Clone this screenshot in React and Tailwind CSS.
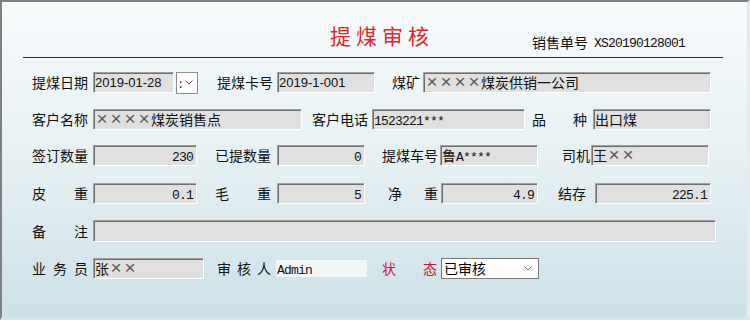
import React from 'react';

const Xs = ({ n }) => (
    <>
        {Array.from({ length: n }).map((_, i) => (
            <span key={i} className="inline-block w-[14px] text-center align-top font-['Liberation_Sans',sans-serif] text-[19px] leading-[18px] font-light text-[#5a5a5a]">×</span>
        ))}
    </>
);

const Sunken = ({ className = '', right, children }) => (
    <div
        className={`h-[21px] shrink-0 bg-[#e0e0e0] border border-t-[#a0a0a0] border-l-[#a0a0a0] border-r-white border-b-white shadow-[inset_1px_1px_0_#6e6e6e] leading-[19px] whitespace-nowrap overflow-hidden ${right ? 'text-right pr-[3px]' : 'pl-[1px]'} ${className}`}
    >
        {children}
    </div>
);

const Mono = ({ children }) => (
    <span className="font-['Liberation_Mono','Noto_Sans_CJK_SC',monospace] text-[13px] tracking-[-0.8px]">{children}</span>
);

const Label = ({ className = '', children }) => (
    <span className={`shrink-0 leading-[21px] whitespace-nowrap ${className}`}>{children}</span>
);

// 两端对齐的标签 e.g. 皮    重
const Spread = ({ className = '', chars }) => (
    <span className={`shrink-0 flex justify-between leading-[21px] ${className}`}>
        {chars.split('').map((c, i) => <span key={i}>{c}</span>)}
    </span>
);

const Chevron = ({ className = '' }) => (
    <svg className={className} width="8" height="5" viewBox="0 0 8 5" fill="none">
        <path d="M0.5 0.5 L4 4 L7.5 0.5" stroke="#6b6b6b" strokeWidth="1" />
    </svg>
);

const App = () => {
    return (
        <div className="w-[750px] h-[320px] overflow-hidden font-['Noto_Sans_CJK_SC',sans-serif] text-[14px] text-[#111]">
            <div className="h-full flex flex-col border-l-2 border-t-2 border-l-[#808080] border-t-[#808080] border-r-[3px] border-b-[3px] border-r-[#e4ecef] border-b-[#d9e6ea] bg-gradient-to-b from-[#f8fbfc] via-[#e6f0f3] to-[#cce1e8]">
                {/* 标题 */}
                <div className="h-[55px] pt-[23px] flex items-start shrink-0">
                    <span className="ml-[328px] text-[21px] leading-none tracking-[5px] text-[#e5262b]">提煤审核</span>
                    <span className="ml-[98px] mt-[9px] leading-none flex items-center">
                        销售单号
                        <span className="ml-[6px]"><Mono>XS20190128001</Mono></span>
                    </span>
                </div>
                <div className="ml-[21px] mr-[24px] h-px bg-[#1c2a8c] shrink-0" />

                <div className="pl-[30px] flex flex-col">
                    {/* 第一行 */}
                    <div className="mt-[14px] flex items-center h-[21px]">
                        <Label className="w-[56px]">提煤日期</Label>
                        <Sunken className="ml-[5px] w-[81px] font-['Liberation_Sans',sans-serif] text-[13px]">2019-01-28</Sunken>
                        <div className="ml-[2px] w-[22px] h-[22px] bg-white border border-[#8c8c8c] flex items-center shrink-0">
                            <span className="ml-[2px] text-[12px] leading-none">:</span>
                            <Chevron className="ml-[3px]" />
                        </div>
                        <Label className="ml-[19px] w-[56px]">提煤卡号</Label>
                        <Sunken className="ml-[4px] w-[98px] font-['Liberation_Sans',sans-serif] text-[13px]">2019-1-001</Sunken>
                        <Label className="ml-[17px] w-[28px]">煤矿</Label>
                        <Sunken className="ml-[3px] w-[288px]"><Xs n={4} />煤炭供销一公司</Sunken>
                    </div>

                    {/* 第二行 */}
                    <div className="mt-[16px] flex items-center h-[21px]">
                        <Label className="w-[56px]">客户名称</Label>
                        <Sunken className="ml-[5px] w-[209px]"><Xs n={4} />煤炭销售点</Sunken>
                        <Label className="ml-[10px] w-[56px]">客户电话</Label>
                        <Sunken className="ml-[4px] w-[153px]"><Mono>1523221***</Mono></Sunken>
                        <Spread className="ml-[7px] w-[55px]" chars="品种" />
                        <Sunken className="ml-[6px] w-[118px]">出口煤</Sunken>
                    </div>

                    {/* 第三行 */}
                    <div className="mt-[15px] flex items-center h-[21px]">
                        <Label className="w-[56px]">签订数量</Label>
                        <Sunken right className="ml-[5px] w-[104px]"><Mono>230</Mono></Sunken>
                        <Label className="ml-[18px] w-[56px]">已提数量</Label>
                        <Sunken right className="ml-[6px] w-[88px]"><Mono>0</Mono></Sunken>
                        <Label className="ml-[17px] w-[56px]">提煤车号</Label>
                        <Sunken className="ml-[2px] w-[98px]">鲁<Mono>A****</Mono></Sunken>
                        <Label className="ml-[24px] w-[28px]">司机</Label>
                        <Sunken className="ml-[1px] w-[118px]">王<Xs n={2} /></Sunken>
                    </div>

                    {/* 第四行 */}
                    <div className="mt-[17px] flex items-center h-[21px]">
                        <Spread className="w-[56px]" chars="皮重" />
                        <Sunken right className="ml-[5px] w-[104px]"><Mono>0.1</Mono></Sunken>
                        <Spread className="ml-[18px] w-[56px]" chars="毛重" />
                        <Sunken right className="ml-[6px] w-[88px]"><Mono>5</Mono></Sunken>
                        <Spread className="ml-[23px] w-[50px]" chars="净重" />
                        <Sunken right className="ml-[3px] w-[97px]"><Mono>4.9</Mono></Sunken>
                        <Label className="ml-[20px] w-[28px]">结存</Label>
                        <Sunken right className="ml-[9px] w-[116px]"><Mono>225.1</Mono></Sunken>
                    </div>

                    {/* 备注 */}
                    <div className="mt-[16px] flex items-center h-[22px]">
                        <Spread className="w-[56px]" chars="备注" />
                        <Sunken className="ml-[5px] w-[623px] h-[22px]" />
                    </div>

                    {/* 最后一行 */}
                    <div className="mt-[16px] flex items-center h-[21px]">
                        <Spread className="w-[56px]" chars="业务员" />
                        <Sunken className="ml-[5px] w-[111px]">张<Xs n={2} /></Sunken>
                        <Spread className="ml-[13px] w-[54px]" chars="审核人" />
                        <div className="ml-[5px] w-[91px] h-[17px] bg-[#f3f6f7] leading-[17px] pl-[1px] shrink-0"><Mono>Admin</Mono></div>
                        <Spread className="ml-[15px] w-[55px] text-[#d0103a]" chars="状态" />
                        <div className="ml-[4px] w-[98px] h-[21px] bg-white border border-[#7a7a7a] flex items-center shrink-0">
                            <span className="ml-[2px] leading-[19px] text-black">已审核</span>
                            <Chevron className="ml-auto mr-[6px]" />
                        </div>
                    </div>
                </div>
            </div>
        </div>
    );
};

export default App;
